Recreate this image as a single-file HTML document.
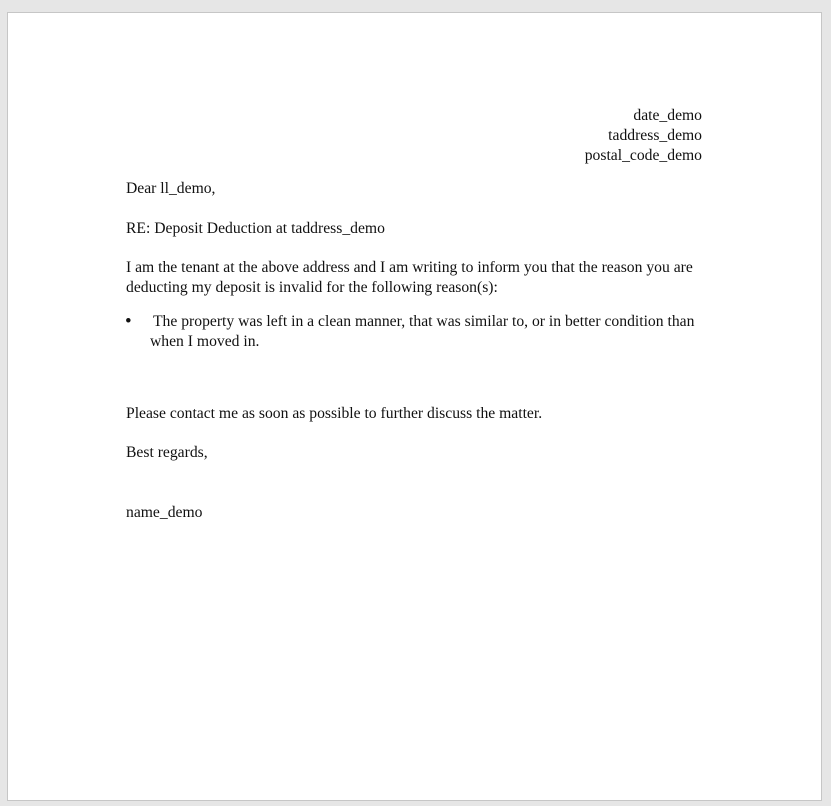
<!DOCTYPE html>
<html><head><style>
html,body{margin:0;padding:0}
body{width:831px;height:806px;background:#e6e6e6;position:relative;overflow:hidden;font-family:"Liberation Serif",serif;font-size:15.65px;color:#111}
.page{position:absolute;left:7px;top:12px;width:813px;height:787px;background:#fff;border:1px solid #c6c6c6}
.t{position:absolute;white-space:nowrap;line-height:20px}
.r{right:129px;text-align:right}
</style></head><body>
<div class="page"></div>
<div class="t r" style="top:106px">date_demo</div>
<div class="t r" style="top:126px">taddress_demo</div>
<div class="t r" style="top:146px">postal_code_demo</div>
<div class="t" style="left:126px;top:179px">Dear ll_demo,</div>
<div class="t" style="left:126px;top:219px">RE: Deposit Deduction at taddress_demo</div>
<div class="t" style="left:126px;top:258px">I am the tenant at the above address and I am writing to inform you that the reason you are</div>
<div class="t" style="left:126px;top:278px">deducting my deposit is invalid for the following reason(s):</div>
<div class="t" style="left:125px;top:312px;font-size:19px">•</div>
<div class="t" style="left:153px;top:312px">The property was left in a clean manner, that was similar to, or in better condition than</div>
<div class="t" style="left:150px;top:332px">when I moved in.</div>
<div class="t" style="left:126px;top:404px">Please contact me as soon as possible to further discuss the matter.</div>
<div class="t" style="left:126px;top:443px">Best regards,</div>
<div class="t" style="left:126px;top:503px">name_demo</div>
</body></html>
